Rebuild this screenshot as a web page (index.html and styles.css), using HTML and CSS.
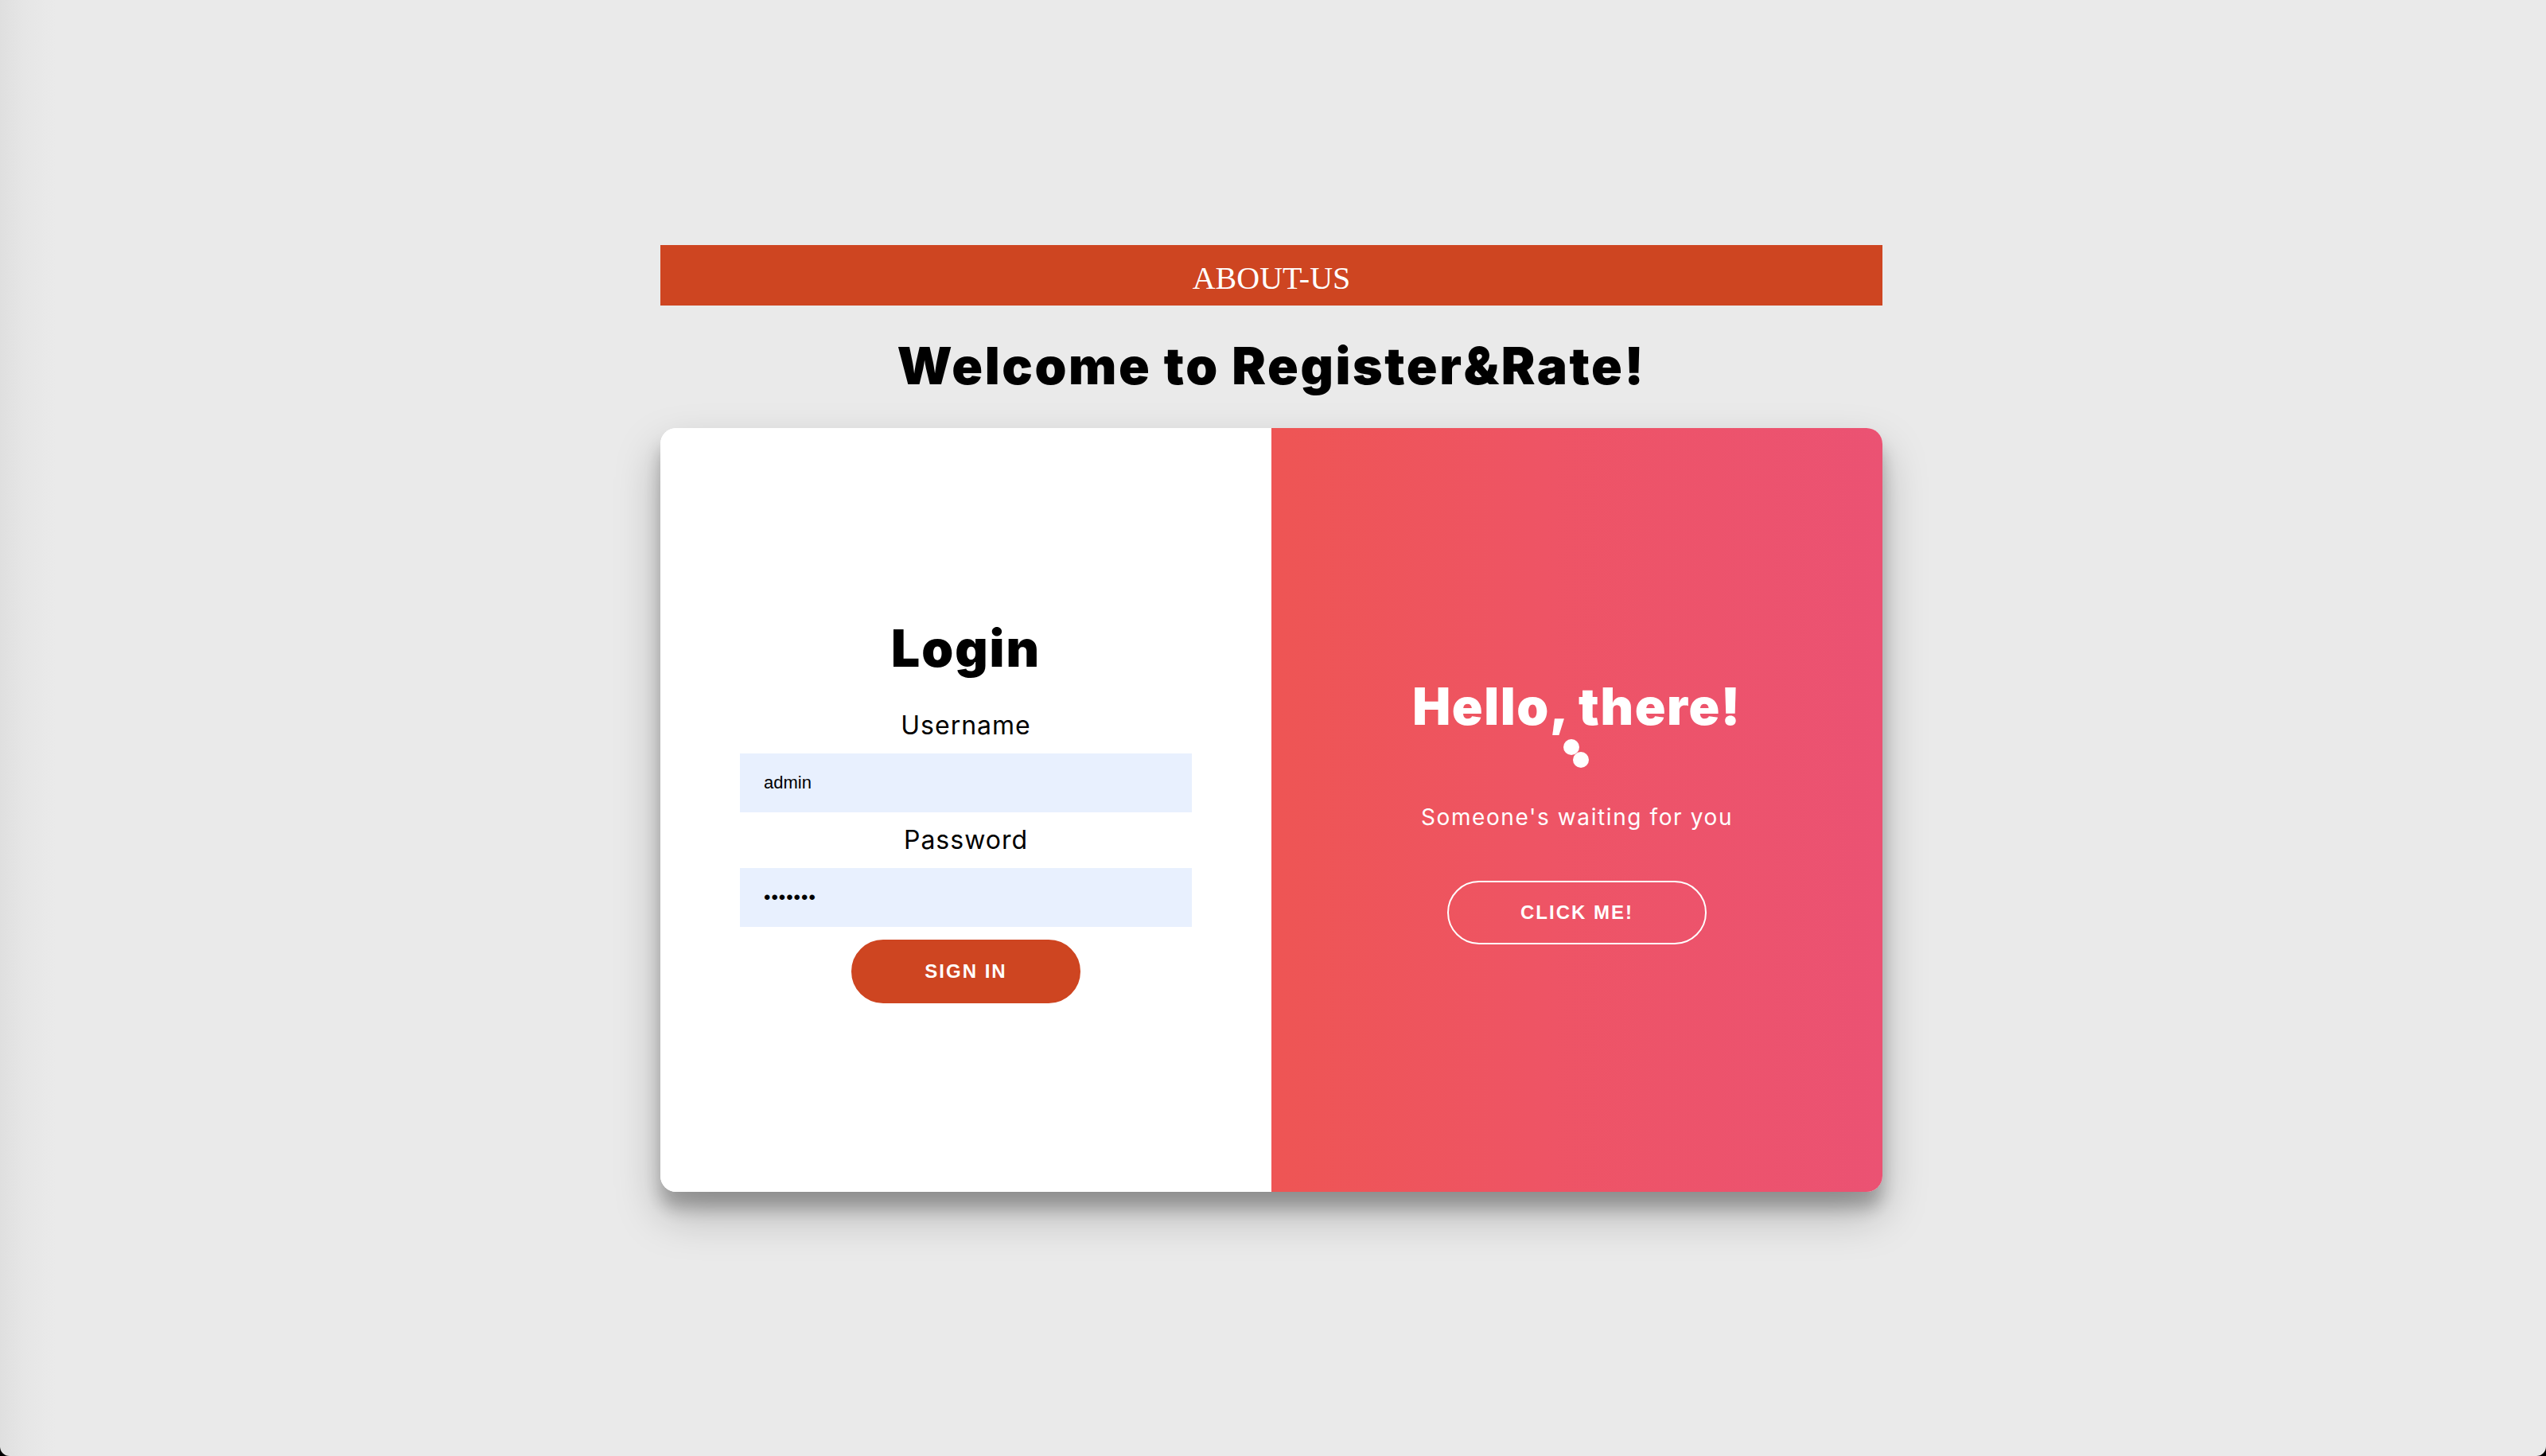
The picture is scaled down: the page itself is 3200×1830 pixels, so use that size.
FILE: index.html
```html
<!DOCTYPE html>
<html lang="en">
<head>
<meta charset="utf-8">
<title>Register&amp;Rate</title>
<link rel="stylesheet" href="styles.css">
</head>
<body>
<div class="page">
  <div class="wrap">
    <div class="topbar">ABOUT-US</div>
    <h1 class="welcome">Welcome to Register&amp;Rate!</h1>
    <div class="card">
      <form class="login">
        <h1 class="title">Login</h1>
        <label class="field-label label-first">Username</label>
        <input class="field" type="text" value="admin">
        <label class="field-label">Password</label>
        <input class="field field-pass" type="password" value="1234567">
        <button class="btn" type="button">Sign In</button>
      </form>
      <div class="overlay">
        <h1 class="title title-light">Hello, there!</h1>
        <svg class="dots" width="40" height="40" viewBox="0 0 40 40" aria-hidden="true">
          <circle cx="13" cy="12" r="10" fill="#fff"/>
          <circle cx="25" cy="28" r="10" fill="#fff"/>
        </svg>
        <p class="tagline">Someone's waiting for you</p>
        <button class="btn btn-ghost" type="button">Click Me!</button>
      </div>
    </div>
  </div>
</div>
</body>
</html>
```
FILE: styles.css
```css
html {
  background: #000;
}
body {
  margin: 0;
  font-family: Inter, "Noto Sans", sans-serif;
}
.page {
  height: 1830px;
  box-sizing: border-box;
  padding-top: 308px;
  background: linear-gradient(to right, #dfdfdf 0, #e6e6e6 30px, #eaeaea 70px, #eaeaea 100%);
  border-bottom-left-radius: 12px;
  border-bottom-right-radius: 12px;
}
.wrap {
  width: 1536px;
  margin-left: calc(50% - 770px);
  display: flex;
  flex-direction: column;
  align-items: stretch;
}
.topbar {
  background: #ce4521;
  color: #fff;
  font-family: "Liberation Serif", "Times New Roman", serif;
  font-size: 40px;
  line-height: 68px;
  padding-top: 8px;
  text-align: center;
}
.welcome {
  margin: 37px 0 39px;
  font-size: 64px;
  line-height: 78px;
  font-weight: 900;
  letter-spacing: 2.6px;
  text-align: center;
  color: #000;
}
.card {
  display: grid;
  grid-template-columns: 1fr 1fr;
  height: 960px;
  border-radius: 20px;
  overflow: hidden;
  background: #fff;
  box-shadow: 0 28px 56px rgba(0, 0, 0, 0.25), 0 20px 20px rgba(0, 0, 0, 0.22);
}
.login {
  margin: 0;
  padding: 0 100px;
  display: flex;
  flex-direction: column;
  align-items: center;
  justify-content: center;
  text-align: center;
  background: #fff;
}
.title {
  margin: 0;
  font-size: 64px;
  line-height: 78px;
  font-weight: 900;
  letter-spacing: 2px;
  color: #000;
}
.title-light {
  color: #fff;
  letter-spacing: 1.6px;
}
.field-label {
  font-size: 32px;
  line-height: 39px;
  color: #000;
  letter-spacing: 1px;
  margin-top: 15px;
}
.label-first {
  margin-top: 38px;
}
.field {
  box-sizing: border-box;
  width: 100%;
  height: 74px;
  margin-top: 16px;
  padding: 24px 30px;
  border: none;
  outline: none;
  background: #e8f0fe;
  font-family: "Liberation Sans", Arial, sans-serif;
  font-size: 22px;
  line-height: 26px;
  color: #000;
}
.field-pass {
  font-size: 24px;
  letter-spacing: 1px;
}
.btn {
  margin-top: 16px;
  border-radius: 40px;
  border: 2px solid #ce4521;
  background: #ce4521;
  color: #fff;
  font-family: "Liberation Sans", Arial, sans-serif;
  font-size: 24px;
  line-height: 28px;
  font-weight: 700;
  padding: 24px 90px;
  letter-spacing: 2px;
  text-transform: uppercase;
}
.overlay {
  display: flex;
  flex-direction: column;
  align-items: center;
  justify-content: center;
  text-align: center;
  background: linear-gradient(to right, #ee5554, #ee5465 45%, #eb5273);
  color: #fff;
}
.dots {
  display: block;
}
.tagline {
  margin: 40px 0 0;
  font-size: 28px;
  line-height: 40px;
  font-weight: 400;
  letter-spacing: 1.6px;
}
.btn-ghost {
  margin-top: 60px;
  background: transparent;
  border-color: #fff;
}
```
